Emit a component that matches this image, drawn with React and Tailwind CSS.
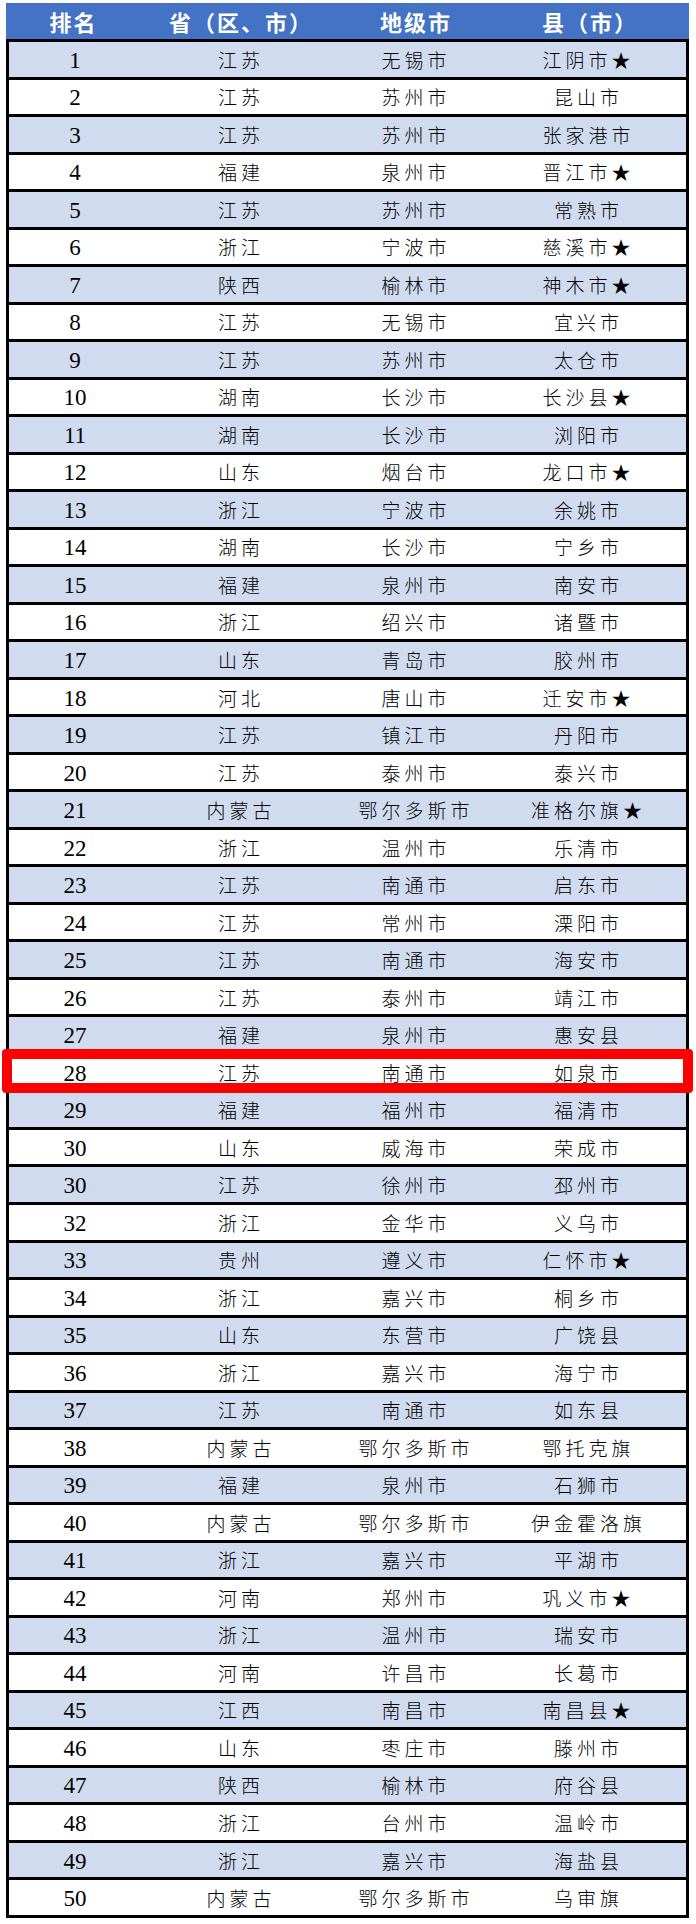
import React from "react";

const rows = [
  [1, "江苏", "无锡市", "江阴市★"],
  [2, "江苏", "苏州市", "昆山市"],
  [3, "江苏", "苏州市", "张家港市"],
  [4, "福建", "泉州市", "晋江市★"],
  [5, "江苏", "苏州市", "常熟市"],
  [6, "浙江", "宁波市", "慈溪市★"],
  [7, "陕西", "榆林市", "神木市★"],
  [8, "江苏", "无锡市", "宜兴市"],
  [9, "江苏", "苏州市", "太仓市"],
  [10, "湖南", "长沙市", "长沙县★"],
  [11, "湖南", "长沙市", "浏阳市"],
  [12, "山东", "烟台市", "龙口市★"],
  [13, "浙江", "宁波市", "余姚市"],
  [14, "湖南", "长沙市", "宁乡市"],
  [15, "福建", "泉州市", "南安市"],
  [16, "浙江", "绍兴市", "诸暨市"],
  [17, "山东", "青岛市", "胶州市"],
  [18, "河北", "唐山市", "迁安市★"],
  [19, "江苏", "镇江市", "丹阳市"],
  [20, "江苏", "泰州市", "泰兴市"],
  [21, "内蒙古", "鄂尔多斯市", "准格尔旗★"],
  [22, "浙江", "温州市", "乐清市"],
  [23, "江苏", "南通市", "启东市"],
  [24, "江苏", "常州市", "溧阳市"],
  [25, "江苏", "南通市", "海安市"],
  [26, "江苏", "泰州市", "靖江市"],
  [27, "福建", "泉州市", "惠安县"],
  [28, "江苏", "南通市", "如泉市"],
  [29, "福建", "福州市", "福清市"],
  [30, "山东", "威海市", "荣成市"],
  [30, "江苏", "徐州市", "邳州市"],
  [32, "浙江", "金华市", "义乌市"],
  [33, "贵州", "遵义市", "仁怀市★"],
  [34, "浙江", "嘉兴市", "桐乡市"],
  [35, "山东", "东营市", "广饶县"],
  [36, "浙江", "嘉兴市", "海宁市"],
  [37, "江苏", "南通市", "如东县"],
  [38, "内蒙古", "鄂尔多斯市", "鄂托克旗"],
  [39, "福建", "泉州市", "石狮市"],
  [40, "内蒙古", "鄂尔多斯市", "伊金霍洛旗"],
  [41, "浙江", "嘉兴市", "平湖市"],
  [42, "河南", "郑州市", "巩义市★"],
  [43, "浙江", "温州市", "瑞安市"],
  [44, "河南", "许昌市", "长葛市"],
  [45, "江西", "南昌市", "南昌县★"],
  [46, "山东", "枣庄市", "滕州市"],
  [47, "陕西", "榆林市", "府谷县"],
  [48, "浙江", "台州市", "温岭市"],
  [49, "浙江", "嘉兴市", "海盐县"],
  [50, "内蒙古", "鄂尔多斯市", "乌审旗"],
];

const cjk = "font-['Noto_Sans_CJK_SC',sans-serif]";

export default function App() {
  return (
    <div className="relative w-[696px] h-[1924px] bg-white">
      <div className="absolute left-0 top-0 w-[696px] pt-[3px]">
        <div className="ml-[6px] w-[683px]">
          <div
            className={`h-[36px] bg-[#4472c4] grid grid-cols-[135px_200px_150px_198px] items-center text-white font-bold text-[22px] tracking-[2px] ${cjk}`}
          >
            <div className="text-center">排名</div>
            <div className="text-center">省（区、市）</div>
            <div className="text-center">地级市</div>
            <div className="text-center">县（市）</div>
          </div>
          <div className="border-x-[3px] border-b-[3px] border-black">
            {rows.map((r, i) => (
              <div
                key={i}
                className={`h-[37.52px] border-t-[3px] border-black grid grid-cols-[132px_200px_150px_195px] items-center text-black ${
                  i % 2 === 0 ? "bg-[#d1dbef]" : "bg-white"
                }`}
              >
                <div className="text-center font-['Liberation_Serif',serif] text-[23px] leading-none pt-[2px]">
                  {r[0]}
                </div>
                <div className={`text-center text-[19px] tracking-[4px] leading-none ${cjk} font-light`}>
                  {r[1]}
                </div>
                <div className={`text-center text-[19px] tracking-[4px] leading-none ${cjk} font-light`}>
                  {r[2]}
                </div>
                <div className={`text-center text-[19px] tracking-[4px] leading-none ${cjk} font-light`}>
                  {r[3]}
                </div>
              </div>
            ))}
          </div>
        </div>
      </div>
      <div className="absolute left-[2px] top-[1049px] w-[691px] h-[44px] border-[10px] border-[#ff0000] rounded-[4px]" />
    </div>
  );
}
